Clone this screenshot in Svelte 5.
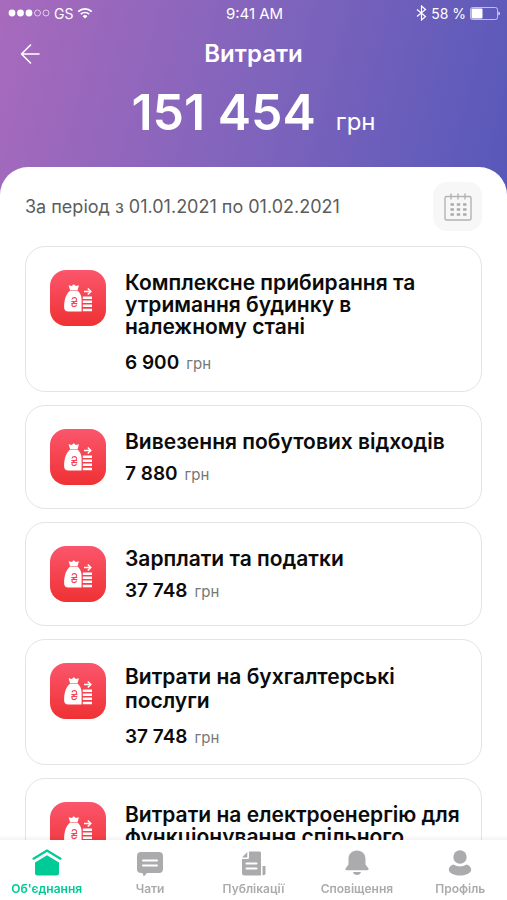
<script>
let active = $state (0);

const period = "За період з 01.01.2021 по 01.02.2021";

const expenses = [
    { title: "Комплексне прибирання та утримання будинку в належному стані", sum: "6 900", size: "long" },
    { title: "Вивезення побутових відходів", sum: "7 880", size: "short" },
    { title: "Зарплати та податки", sum: "37 748", size: "short" },
    { title: "Витрати на бухгалтерські послуги", sum: "37 748", size: "medium" },
    { title: "Витрати на електроенергію для функціонування спільного", sum: "", size: "long" },
];

const tabs = ["Об'єднання", "Чати", "Публікації", "Сповіщення", "Профіль"];
</script>

<div class="app">
    <header class="header">
        <div class="status">
            <div class="status__left">
                <svg width="42" height="10" viewBox="0 0 42 10" aria-hidden="true">
                    <g fill="#fff">
                        <circle cx="4" cy="5" r="3.4" />
                        <circle cx="12.5" cy="5" r="3.4" />
                        <circle cx="21" cy="5" r="3.4" />
                    </g>
                    <g fill="none" stroke="#fff" stroke-opacity="0.65">
                        <circle cx="29.5" cy="5" r="3" />
                        <circle cx="38" cy="5" r="3" />
                    </g>
                </svg>
                <span>GS</span>
                <svg width="16" height="12" viewBox="0 0 16 12" aria-hidden="true">
                    <path d="M1.2 4.6a9.8 9.8 0 0 1 13.6 0M3.8 7.2a6 6 0 0 1 8.4 0" fill="none" stroke="#fff" stroke-width="1.7" />
                    <path d="M5.6 9.2a3.5 3.5 0 0 1 4.8 0L8 11.6z" fill="#fff" />
                </svg>
            </div>
            <span class="status__time">9:41 AM</span>
            <div class="status__right">
                <svg width="11" height="16" viewBox="0 0 11 16" aria-hidden="true">
                    <path d="M1 4.5l8.5 7L5.5 15V1l4 3.5-8.5 7" fill="none" stroke="#fff" stroke-width="1.2" />
                </svg>
                <span>58 %</span>
                <svg width="31" height="13" viewBox="0 0 31 13" aria-hidden="true">
                    <rect x="0.5" y="0.5" width="27" height="12" rx="2" fill="none" stroke="#fff" stroke-opacity="0.6" />
                    <rect x="1.5" y="1.5" width="11" height="10" rx="1" fill="#fff" />
                    <path d="M28.5 4.5a2.2 2.2 0 0 1 0 4z" fill="#fff" />
                </svg>
            </div>
        </div>

        <div class="topbar">
            <button class="topbar__back" type="button" aria-label="Назад">
                <svg width="20" height="20" viewBox="0 0 20 20" aria-hidden="true">
                    <path d="M19 10H1.5M10.5 1L1.5 10l9 9" fill="none" stroke="#fff" stroke-width="1.6" stroke-linecap="round" stroke-linejoin="round" />
                </svg>
            </button>
            <h1>Витрати</h1>
        </div>

        <p class="total"><strong>151 454</strong> <span>грн</span></p>
    </header>

    <main class="sheet">
        <div class="period">
            <p>{period}</p>
            <button class="period__button" type="button" aria-label="Обрати період">
                <svg width="28" height="28" viewBox="0 0 28 28" aria-hidden="true">
                    <g fill="none" stroke="#b3b3b3" stroke-width="1.4" stroke-linecap="round">
                        <rect x="1" y="3.5" width="26" height="23.5" rx="1.5" />
                        <path d="M7 1v5M14 1v5M21 1v5" />
                    </g>
                    <path d="M6.5 11.5h16M6.5 16.5h16M6.5 21.5h16" stroke="#aaa" stroke-width="2.6" stroke-dasharray="3.4 2.9" />
                </svg>
            </button>
        </div>

        <ul class="list">
            {#each expenses as item}
                <li class="card {item.size}">
                    <div class="card__icon">
                        <svg width="56" height="56" viewBox="0 0 56 56" aria-hidden="true">
                            <g fill="#fff">
                                <path d="M18.6 15.3l3.1.6 2.1-1.6 2.1 1.6 3.1-.6-1.5 4.9h-7.4z" />
                                <path d="M19.8 20.8h8c2.2 2 3.8 4.8 3.8 9v11.8H18.4c-2.8 0-4.3-1.7-4.3-4.4 0-7 1.8-13 5.7-16.4z" />
                                <path d="M32.8 26.5h9.2v2.5h-9.2zM32.8 30.5h9.2v2.5h-9.2zM32.8 34.5h9.2v2.5h-9.2zM32.8 38.7h9.2v2.5h-9.2z" />
                            </g>
                            <path d="M34 21.5h6.5M37.8 18.5l3 3-3 3" fill="none" stroke="#fff" stroke-width="1.5" />
                            <path d="M22 29.5c.6-2.800 5-2.400 4.600.5-.3 1.800-4.700 2.400-4.700 4.700 0 2.500 4.200 2.600 4.700 0M21.300 31.500h6M21.300 33.500h6" fill="none" stroke="#f5445a" stroke-width="1.1" />
                        </svg>
                    </div>
                    <div class="card__text">
                        <h2>{item.title}</h2>
                        {#if item.sum}
                            <p><strong>{item.sum}</strong> <span>грн</span></p>
                        {/if}
                    </div>
                </li>
            {/each}
        </ul>
    </main>

    <nav class="tabs">
        {#each tabs as tab, i}
            <button type="button" class="tabs__item" class:active={active === i} onclick={() => active = i}>
                <svg width="30" height="28" viewBox="0 0 30 28" fill="currentColor" aria-hidden="true">
                    {#if i === 0}
                        <path d="M1.5 9.7L15 1.5l13.5 8.2" fill="none" stroke="currentColor" stroke-width="2.2" stroke-linecap="round" />
                        <path d="M15 6.3l12 7.2V24a2.5 2.5 0 0 1-2.5 2.5h-19A2.5 2.5 0 0 1 3 24V13.5z" />
                    {:else if i === 1}
                        <path d="M6 3h18a4 4 0 0 1 4 4v13a4 4 0 0 1-4 4H12l-3.2 3.5L7.5 24H6a4 4 0 0 1-4-4V7a4 4 0 0 1 4-4z" />
                        <path d="M8 11.5h14M8 16.5h14" stroke="#fff" stroke-width="2" stroke-linecap="round" />
                    {:else if i === 2}
                        <path d="M11 2.5h10.5a1.5 1.5 0 0 1 1.5 1.5v22.5H6.5A2.5 2.5 0 0 1 4 24V10h5.5A1.5 1.5 0 0 0 11 8.5zM9.3 3v5.5H4z" />
                        <path d="M24.5 17h3v7.5a2 2 0 0 1-3 1.5z" />
                        <path d="M8.5 14.5h10M8.5 19.5h10" stroke="#fff" stroke-width="2" stroke-linecap="round" />
                    {:else if i === 3}
                        <path d="M15 1.5c-5 0-8.5 3.5-8.5 8.5v5.5L3.7 19.2c-.7 1-.2 2 1 2h20.6c1.2 0 1.7-1 1-2l-2.8-3.7V10c0-5-3.5-8.5-8.5-8.5zM11 23h8c-.4 1.8-2 3-4 3s-3.6-1.2-4-3z" />
                    {:else}
                        <circle cx="15" cy="8" r="6.7" />
                        <path d="M8.5 15.5c4 2.6 9 2.6 13 0 2.8.8 4.7 2.8 4.7 5 0 3.5-5 6-11.2 6S3.8 24 3.8 20.5c0-2.2 1.9-4.2 4.7-5z" />
                    {/if}
                </svg>
                <span>{tab}</span>
            </button>
        {/each}
    </nav>
</div>

<style>
:global(body) {
    margin: 0;
    background: #fff;
}

.app {
    display: flex;
    flex-direction: column;
    height: 100vh;
    overflow: hidden;
    font-family: Inter, "Liberation Sans", sans-serif;
    color: #0b0b0b;
}

h1, h2, p, ul {
    margin: 0;
    padding: 0;
}

button {
    border: none;
    background: none;
    padding: 0;
    font-family: inherit;
    cursor: pointer;
}

svg {
    display: block;
    flex-shrink: 0;
}

.header {
    flex-shrink: 0;
    color: #fff;
    padding-bottom: 56px;
    background: linear-gradient(105deg, #a86abc 0%, #8064bc 50%, #5d5aba 92%, #5557b8 100%);
}

.status {
    display: grid;
    grid-template-columns: 1fr auto 1fr;
    align-items: center;
    height: 26px;
    padding: 0 6px 0 8px;
    font-size: 14px;
}

.status__left,
.status__right {
    display: flex;
    align-items: center;
    gap: 4px;
}

.status__time {
    font-size: 15px;
}

.status__right {
    justify-content: flex-end;
}

.topbar {
    display: grid;
    grid-template-columns: 24px 1fr 24px;
    align-items: center;
    height: 56px;
    padding: 0 20px;
}

.topbar h1 {
    font-size: 24px;
    font-weight: 600;
    line-height: 32px;
    text-align: center;
}

.total {
    display: flex;
    justify-content: center;
    align-items: baseline;
    gap: 20px;
    line-height: 60px;
    font-size: 24px;
}

.total strong {
    font-size: 50px;
    font-weight: 600;
}

.sheet {
    flex: 1;
    min-height: 0;
    margin-top: -41px;
    padding: 15px 25px 0;
    border-radius: 28px 28px 0 0;
    background: #fff;
    overflow-y: auto;
    scrollbar-width: none;
}

.period {
    display: flex;
    align-items: center;
    justify-content: space-between;
    margin-bottom: 15px;
    font-size: 18px;
    color: #5c5c5c;
}

.period__button {
    display: flex;
    align-items: center;
    justify-content: center;
    width: 49px;
    height: 49px;
    border-radius: 14px;
    background: #f7f7f7;
}

.list {
    display: flex;
    flex-direction: column;
    gap: 13px;
    list-style: none;
}

.card {
    display: flex;
    gap: 19px;
    padding: 23px 12px 16px 24px;
    border: 1px solid #e4e4e4;
    border-radius: 20px;
}

.card__icon {
    flex-shrink: 0;
    width: 56px;
    height: 56px;
    border-radius: 16px;
    background: linear-gradient(#fb566c, #ef3133);
}

.card__text {
    padding-top: 2px;
}

.card h2 {
    margin-bottom: 13px;
    font-size: 21px;
    font-weight: 600;
    line-height: 22px;
}

.card p {
    display: flex;
    align-items: baseline;
    gap: 7px;
    font-size: 15px;
    line-height: 16px;
    color: #777;
}

.card strong {
    font-size: 19px;
    font-weight: 600;
    line-height: 24px;
    color: #0b0b0b;
}

.short {
    padding-bottom: 22px;
}

.short h2 {
    margin-bottom: 9px;
}

.medium {
    padding-bottom: 15px;
}

.medium h2 {
    margin-bottom: 12px;
    line-height: 24px;
}

.tabs {
    position: relative;
    flex-shrink: 0;
    display: grid;
    grid-template-columns: repeat(5, 1fr);
    height: 60px;
    margin: 0 -5px;
    background: #fff;
    box-shadow: 0 -1px 5px rgba(0, 0, 0, 0.08);
}

.tabs__item {
    display: flex;
    flex-direction: column;
    align-items: center;
    padding-top: 9px;
    gap: 4px;
    font-size: 12px;
    font-weight: 600;
    line-height: 16px;
    color: #ababad;
}

.tabs__item.active {
    color: #00cb97;
}
</style>
